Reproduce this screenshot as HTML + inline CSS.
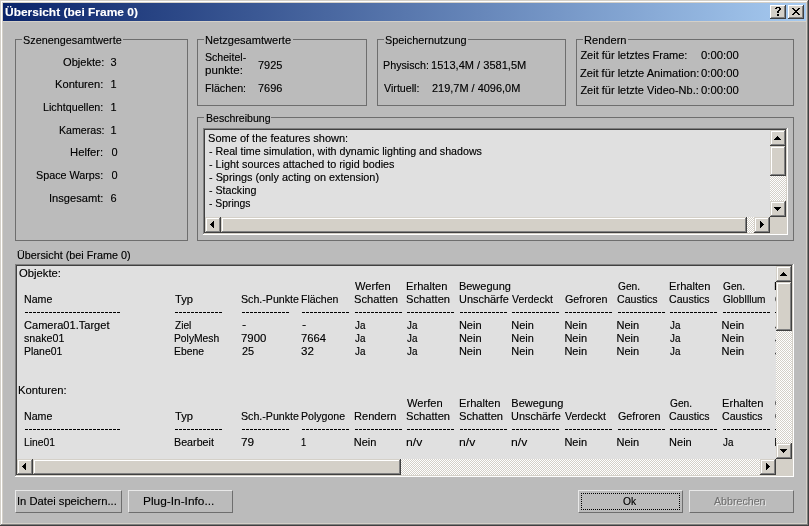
<!DOCTYPE html>
<html><head><meta charset="utf-8"><style>
html,body{margin:0;padding:0;width:809px;height:526px;overflow:hidden;background:#bbbbbb}
body>div,body>svg{position:absolute}
div>div{position:absolute}
.t{position:absolute;font-family:"Liberation Sans", sans-serif;font-size:11px;line-height:13px;height:13px;white-space:pre;color:#000;filter:url(#crisp)}
.g{position:absolute;border:1px solid #6e6e6e}
.tb{position:absolute;width:16px;height:14px;background:#d4d0c8;box-shadow:inset -1px -1px #404040,inset 1px 1px #fff,inset -2px -2px #808080}
.sb{position:absolute;width:16px;height:16px;background:#d4d0c8;box-shadow:inset -1px -1px #404040,inset 1px 1px #d4d0c8,inset -2px -2px #808080,inset 2px 2px #fff}
.th{position:absolute;background:#d4d0c8;border:1px solid;border-color:#d4d0c8 #404040 #404040 #d4d0c8;box-shadow:inset -1px -1px #808080,inset 1px 1px #fff}
.tr{position:absolute;background-color:#fff;background-image:conic-gradient(#d4d0c8 25%,transparent 0 50%,#d4d0c8 0 75%,transparent 0);background-size:2px 2px}
.sk{position:absolute;box-shadow:inset -1px -1px #fff,inset 1px 1px #808080,inset -2px -2px #d4d0c8,inset 2px 2px #404040}
.ski{position:absolute;left:0;top:0;border:1px solid;border-color:#404040 #d4d0c8 #d4d0c8 #404040}
.bt{position:absolute;border:1px solid;border-color:#e8e8e8 #6e6e6e #6e6e6e #e8e8e8;box-sizing:border-box}
.ds{position:absolute;height:1px;background-image:linear-gradient(to right,#000 3px,transparent 3px);background-size:4px 1px}
.focus{position:absolute;box-sizing:border-box;border:1px dotted #000}
i{position:absolute;width:0;height:0;border:solid transparent}
.au{left:4px;top:6px;border-width:0 4px 4px 4px;border-bottom-color:#000}
.ad{left:4px;top:6px;border-width:4px 4px 0 4px;border-top-color:#000}
.al{left:5px;top:4px;border-width:4px 4px 4px 0;border-right-color:#000}
.ar{left:6px;top:4px;border-width:4px 0 4px 4px;border-left-color:#000}
</style></head><body>
<svg width="0" height="0" style="position:absolute"><filter id="crisp" x="0" y="0" width="100%" height="100%"><feComponentTransfer><feFuncA type="gamma" amplitude="1" exponent="0.75" offset="0"/></feComponentTransfer></filter></svg>
<div style="left:0px;top:0px;width:809px;height:526px;background:#404040;"></div>
<div style="left:0px;top:0px;width:808px;height:525px;background:#d4d0c8;"></div>
<div style="left:1px;top:1px;width:807px;height:524px;background:#808080;"></div>
<div style="left:1px;top:1px;width:806px;height:523px;background:#ffffff;"></div>
<div style="left:2px;top:2px;width:805px;height:522px;background:#d4d0c8;"></div>
<div style="left:3px;top:3px;width:803px;height:520px;background:#bbbbbb;"></div>
<div style="left:3px;top:3px;width:803px;height:18px;background:linear-gradient(to right,#0a246a,#a6caf0);"></div>
<div style="left:3px;top:21px;width:803px;height:1px;background:#d4d0c8;"></div>
<div class="t" style="left:4.51px;top:6px;transform:scaleX(1.0868);transform-origin:0 0;color:#fff;font-weight:bold">Übersicht (bei Frame 0)</div>
<div class="tb" style="left:770px;top:5px"></div>
<div class="tb" style="left:788px;top:5px"></div>
<svg style="position:absolute;left:775px;top:7px" width="6" height="9" shape-rendering="crispEdges" fill="#000"><rect x="1" y="0" width="1" height="1"/><rect x="2" y="0" width="1" height="1"/><rect x="3" y="0" width="1" height="1"/><rect x="4" y="0" width="1" height="1"/><rect x="0" y="1" width="1" height="1"/><rect x="1" y="1" width="1" height="1"/><rect x="4" y="1" width="1" height="1"/><rect x="5" y="1" width="1" height="1"/><rect x="4" y="2" width="1" height="1"/><rect x="5" y="2" width="1" height="1"/><rect x="3" y="3" width="1" height="1"/><rect x="4" y="3" width="1" height="1"/><rect x="2" y="4" width="1" height="1"/><rect x="3" y="4" width="1" height="1"/><rect x="2" y="5" width="1" height="1"/><rect x="3" y="5" width="1" height="1"/><rect x="2" y="7" width="1" height="1"/><rect x="3" y="7" width="1" height="1"/><rect x="2" y="8" width="1" height="1"/><rect x="3" y="8" width="1" height="1"/></svg>
<svg style="position:absolute;left:792px;top:8px" width="8" height="7" shape-rendering="crispEdges" fill="#000"><rect x="0" y="0" width="1" height="1"/><rect x="1" y="0" width="1" height="1"/><rect x="6" y="0" width="1" height="1"/><rect x="7" y="0" width="1" height="1"/><rect x="1" y="1" width="1" height="1"/><rect x="2" y="1" width="1" height="1"/><rect x="5" y="1" width="1" height="1"/><rect x="6" y="1" width="1" height="1"/><rect x="2" y="2" width="1" height="1"/><rect x="3" y="2" width="1" height="1"/><rect x="4" y="2" width="1" height="1"/><rect x="5" y="2" width="1" height="1"/><rect x="3" y="3" width="1" height="1"/><rect x="4" y="3" width="1" height="1"/><rect x="2" y="4" width="1" height="1"/><rect x="3" y="4" width="1" height="1"/><rect x="4" y="4" width="1" height="1"/><rect x="5" y="4" width="1" height="1"/><rect x="1" y="5" width="1" height="1"/><rect x="2" y="5" width="1" height="1"/><rect x="5" y="5" width="1" height="1"/><rect x="6" y="5" width="1" height="1"/><rect x="0" y="6" width="1" height="1"/><rect x="1" y="6" width="1" height="1"/><rect x="6" y="6" width="1" height="1"/><rect x="7" y="6" width="1" height="1"/></svg>
<div class="g" style="left:15px;top:39px;width:171px;height:200px"></div>
<div style="left:22px;top:37px;width:101.4px;height:5px;background:#bbbbbb"></div>
<div class="t" style="left:23.02px;top:34px;transform:scaleX(0.9838);transform-origin:0 0;">Szenengesamtwerte</div>
<div class="g" style="left:197px;top:39px;width:168px;height:65px"></div>
<div style="left:204px;top:37px;width:88.5px;height:5px;background:#bbbbbb"></div>
<div class="t" style="left:205.09px;top:34px;transform:scaleX(1.0060);transform-origin:0 0;">Netzgesamtwerte</div>
<div class="g" style="left:377px;top:39px;width:187px;height:65px"></div>
<div style="left:384px;top:37px;width:84.10000000000002px;height:5px;background:#bbbbbb"></div>
<div class="t" style="left:384.81px;top:34px;transform:scaleX(0.9889);transform-origin:0 0;">Speichernutzung</div>
<div class="g" style="left:576px;top:39px;width:216px;height:65px"></div>
<div style="left:583px;top:37px;width:45.299999999999955px;height:5px;background:#bbbbbb"></div>
<div class="t" style="left:583.59px;top:34px;transform:scaleX(1.0073);transform-origin:0 0;">Rendern</div>
<div class="g" style="left:197px;top:117px;width:595px;height:122px"></div>
<div style="left:204px;top:115px;width:67.30000000000001px;height:5px;background:#bbbbbb"></div>
<div class="t" style="left:205.64px;top:112px;transform:scaleX(0.9591);transform-origin:0 0;">Beschreibung</div>
<div class="t" style="left:62.50px;top:56px;transform:scaleX(1.0100);transform-origin:0 0;">Objekte:</div>
<div class="t" style="left:110.60px;top:56px;">3</div>
<div class="t" style="left:55.29px;top:78px;transform:scaleX(1.0130);transform-origin:0 0;">Konturen:</div>
<div class="t" style="left:110.60px;top:78px;">1</div>
<div class="t" style="left:43.32px;top:101px;transform:scaleX(0.9767);transform-origin:0 0;">Lichtquellen:</div>
<div class="t" style="left:110.60px;top:101px;">1</div>
<div class="t" style="left:58.54px;top:124px;transform:scaleX(0.9644);transform-origin:0 0;">Kameras:</div>
<div class="t" style="left:110.60px;top:124px;">1</div>
<div class="t" style="left:70.07px;top:146px;transform:scaleX(1.0258);transform-origin:0 0;">Helfer:</div>
<div class="t" style="left:111.60px;top:146px;">0</div>
<div class="t" style="left:36.32px;top:169px;transform:scaleX(0.9791);transform-origin:0 0;">Space Warps:</div>
<div class="t" style="left:111.60px;top:169px;">0</div>
<div class="t" style="left:49.39px;top:192px;transform:scaleX(1.0096);transform-origin:0 0;">Insgesamt:</div>
<div class="t" style="left:110.60px;top:192px;">6</div>
<div class="t" style="left:205.24px;top:51px;transform:scaleX(0.9619);transform-origin:0 0;">Scheitel-</div>
<div class="t" style="left:205.15px;top:64px;transform:scaleX(1.0529);transform-origin:0 0;">punkte:</div>
<div class="t" style="left:257.70px;top:59px;transform:scaleX(0.9957);transform-origin:0 0;">7925</div>
<div class="t" style="left:205.23px;top:82px;transform:scaleX(0.9732);transform-origin:0 0;">Flächen:</div>
<div class="t" style="left:257.70px;top:82px;transform:scaleX(0.9957);transform-origin:0 0;">7696</div>
<div class="t" style="left:383.12px;top:59px;transform:scaleX(0.9756);transform-origin:0 0;">Physisch:</div>
<div class="t" style="left:431.39px;top:59px;transform:scaleX(1.0054);transform-origin:0 0;">1513,4M / 3581,5M</div>
<div class="t" style="left:384.10px;top:82px;transform:scaleX(0.9722);transform-origin:0 0;">Virtuell:</div>
<div class="t" style="left:432.40px;top:82px;transform:scaleX(0.9955);transform-origin:0 0;">219,7M / 4096,0M</div>
<div class="t" style="left:580.40px;top:49px;">Zeit für letztes Frame:</div>
<div class="t" style="left:701.30px;top:49px;transform:scaleX(1.0306);transform-origin:0 0;">0:00:00</div>
<div class="t" style="left:580.40px;top:67px;transform:scaleX(1.0103);transform-origin:0 0;">Zeit für letzte Animation:</div>
<div class="t" style="left:701.30px;top:67px;transform:scaleX(1.0306);transform-origin:0 0;">0:00:00</div>
<div class="t" style="left:580.40px;top:84px;">Zeit für letzte Video-Nb.:</div>
<div class="t" style="left:701.30px;top:84px;transform:scaleX(1.0306);transform-origin:0 0;">0:00:00</div>
<div class="sk" style="left:203px;top:128px;width:585px;height:107px"></div>
<div style="left:205px;top:130px;width:581px;height:103px;background:#e0e0e0;"></div>
<div class="t" style="left:208.10px;top:132px;">Some of the features shown:</div>
<div class="t" style="left:209.10px;top:145px;transform:scaleX(0.9705);transform-origin:0 0;">- Real time simulation, with dynamic lighting and shadows</div>
<div class="t" style="left:209.10px;top:158px;transform:scaleX(0.9815);transform-origin:0 0;">- Light sources attached to rigid bodies</div>
<div class="t" style="left:209.10px;top:171px;transform:scaleX(0.9860);transform-origin:0 0;">- Springs (only acting on extension)</div>
<div class="t" style="left:209.10px;top:184px;transform:scaleX(0.9688);transform-origin:0 0;">- Stacking</div>
<div class="t" style="left:209.10px;top:197px;transform:scaleX(0.9432);transform-origin:0 0;">- Springs</div>
<div class="sb" style="left:770px;top:130px"></div>
<svg style="position:absolute;left:774px;top:136px" width="7" height="4" shape-rendering="crispEdges" fill="#000"><rect x="3" y="0" width="1" height="1"/><rect x="2" y="1" width="1" height="1"/><rect x="3" y="1" width="1" height="1"/><rect x="4" y="1" width="1" height="1"/><rect x="1" y="2" width="1" height="1"/><rect x="2" y="2" width="1" height="1"/><rect x="3" y="2" width="1" height="1"/><rect x="4" y="2" width="1" height="1"/><rect x="5" y="2" width="1" height="1"/><rect x="0" y="3" width="1" height="1"/><rect x="1" y="3" width="1" height="1"/><rect x="2" y="3" width="1" height="1"/><rect x="3" y="3" width="1" height="1"/><rect x="4" y="3" width="1" height="1"/><rect x="5" y="3" width="1" height="1"/><rect x="6" y="3" width="1" height="1"/></svg>
<div class="sb" style="left:770px;top:146px;width:16px;height:30px"></div>
<div class="tr" style="left:770px;top:176px;width:16px;height:25px"></div>
<div class="sb" style="left:770px;top:201px"></div>
<svg style="position:absolute;left:774px;top:207px" width="7" height="4" shape-rendering="crispEdges" fill="#000"><rect x="0" y="0" width="1" height="1"/><rect x="1" y="0" width="1" height="1"/><rect x="2" y="0" width="1" height="1"/><rect x="3" y="0" width="1" height="1"/><rect x="4" y="0" width="1" height="1"/><rect x="5" y="0" width="1" height="1"/><rect x="6" y="0" width="1" height="1"/><rect x="1" y="1" width="1" height="1"/><rect x="2" y="1" width="1" height="1"/><rect x="3" y="1" width="1" height="1"/><rect x="4" y="1" width="1" height="1"/><rect x="5" y="1" width="1" height="1"/><rect x="2" y="2" width="1" height="1"/><rect x="3" y="2" width="1" height="1"/><rect x="4" y="2" width="1" height="1"/><rect x="3" y="3" width="1" height="1"/></svg>
<div class="sb" style="left:205px;top:217px"></div>
<svg style="position:absolute;left:210px;top:221px" width="4" height="7" shape-rendering="crispEdges" fill="#000"><rect x="3" y="0" width="1" height="1"/><rect x="2" y="1" width="1" height="1"/><rect x="3" y="1" width="1" height="1"/><rect x="1" y="2" width="1" height="1"/><rect x="2" y="2" width="1" height="1"/><rect x="3" y="2" width="1" height="1"/><rect x="0" y="3" width="1" height="1"/><rect x="1" y="3" width="1" height="1"/><rect x="2" y="3" width="1" height="1"/><rect x="3" y="3" width="1" height="1"/><rect x="1" y="4" width="1" height="1"/><rect x="2" y="4" width="1" height="1"/><rect x="3" y="4" width="1" height="1"/><rect x="2" y="5" width="1" height="1"/><rect x="3" y="5" width="1" height="1"/><rect x="3" y="6" width="1" height="1"/></svg>
<div class="sb" style="left:221px;top:217px;width:526px;height:16px"></div>
<div class="tr" style="left:747px;top:217px;width:7px;height:16px"></div>
<div class="sb" style="left:754px;top:217px"></div>
<svg style="position:absolute;left:760px;top:221px" width="4" height="7" shape-rendering="crispEdges" fill="#000"><rect x="0" y="0" width="1" height="1"/><rect x="0" y="1" width="1" height="1"/><rect x="1" y="1" width="1" height="1"/><rect x="0" y="2" width="1" height="1"/><rect x="1" y="2" width="1" height="1"/><rect x="2" y="2" width="1" height="1"/><rect x="0" y="3" width="1" height="1"/><rect x="1" y="3" width="1" height="1"/><rect x="2" y="3" width="1" height="1"/><rect x="3" y="3" width="1" height="1"/><rect x="0" y="4" width="1" height="1"/><rect x="1" y="4" width="1" height="1"/><rect x="2" y="4" width="1" height="1"/><rect x="0" y="5" width="1" height="1"/><rect x="1" y="5" width="1" height="1"/><rect x="0" y="6" width="1" height="1"/></svg>
<div style="left:770px;top:217px;width:16px;height:16px;background:#d4d0c8;"></div>
<div class="t" style="left:16.92px;top:249px;transform:scaleX(0.9833);transform-origin:0 0;">Übersicht (bei Frame 0)</div>
<div class="sk" style="left:15px;top:264px;width:779px;height:213px"></div>
<div style="left:17px;top:266px;width:759px;height:193px;background:#e0e0e0;overflow:hidden">
<div class="t" style="left:2.30px;top:1px;transform:scaleX(1.0250);transform-origin:0 0;">Objekte:</div>
<div class="t" style="left:7.09px;top:27px;transform:scaleX(0.9643);transform-origin:0 0;">Name</div>
<div class="ds" style="left:8px;top:46px;width:95px"></div>
<div class="t" style="left:7.04px;top:53px;transform:scaleX(1.0060);transform-origin:0 0;">Camera01.Target</div>
<div class="t" style="left:7.08px;top:66px;transform:scaleX(0.9700);transform-origin:0 0;">snake01</div>
<div class="t" style="left:7.10px;top:79px;transform:scaleX(0.9487);transform-origin:0 0;">Plane01</div>
<div class="t" style="left:157.90px;top:27px;transform:scaleX(1.0176);transform-origin:0 0;">Typ</div>
<div class="ds" style="left:158px;top:46px;width:47px"></div>
<div class="t" style="left:157.90px;top:53px;transform:scaleX(0.9176);transform-origin:0 0;">Ziel</div>
<div class="t" style="left:156.96px;top:66px;transform:scaleX(0.9362);transform-origin:0 0;">PolyMesh</div>
<div class="t" style="left:156.96px;top:79px;transform:scaleX(0.9419);transform-origin:0 0;">Ebene</div>
<div class="t" style="left:224.23px;top:27px;transform:scaleX(0.9678);transform-origin:0 0;">Sch.-Punkte</div>
<div class="ds" style="left:225px;top:46px;width:47px"></div>
<div class="t" style="left:225.20px;top:52px;transform:scaleX(1.1500);transform-origin:0 0;">-</div>
<div class="t" style="left:224.17px;top:66px;transform:scaleX(1.0348);transform-origin:0 0;">7900</div>
<div class="t" style="left:225.20px;top:79px;transform:scaleX(0.9917);transform-origin:0 0;">25</div>
<div class="t" style="left:284.34px;top:27px;transform:scaleX(0.9553);transform-origin:0 0;">Flächen</div>
<div class="ds" style="left:285px;top:46px;width:47px"></div>
<div class="t" style="left:285.30px;top:52px;transform:scaleX(1.1500);transform-origin:0 0;">-</div>
<div class="t" style="left:284.28px;top:66px;transform:scaleX(1.0217);transform-origin:0 0;">7664</div>
<div class="t" style="left:284.25px;top:79px;transform:scaleX(1.0545);transform-origin:0 0;">32</div>
<div class="t" style="left:338.40px;top:14px;transform:scaleX(1.0114);transform-origin:0 0;">Werfen</div>
<div class="t" style="left:337.39px;top:27px;transform:scaleX(1.0143);transform-origin:0 0;">Schatten</div>
<div class="ds" style="left:338px;top:46px;width:47px"></div>
<div class="t" style="left:338.40px;top:53px;transform:scaleX(0.8917);transform-origin:0 0;">Ja</div>
<div class="t" style="left:338.40px;top:66px;transform:scaleX(0.8917);transform-origin:0 0;">Ja</div>
<div class="t" style="left:338.40px;top:79px;transform:scaleX(0.8917);transform-origin:0 0;">Ja</div>
<div class="t" style="left:389.29px;top:14px;transform:scaleX(1.0128);transform-origin:0 0;">Erhalten</div>
<div class="t" style="left:389.29px;top:27px;transform:scaleX(1.0143);transform-origin:0 0;">Schatten</div>
<div class="ds" style="left:390px;top:46px;width:47px"></div>
<div class="t" style="left:390.30px;top:53px;transform:scaleX(0.8917);transform-origin:0 0;">Ja</div>
<div class="t" style="left:390.30px;top:66px;transform:scaleX(0.8917);transform-origin:0 0;">Ja</div>
<div class="t" style="left:390.30px;top:79px;transform:scaleX(0.8917);transform-origin:0 0;">Ja</div>
<div class="t" style="left:441.90px;top:14px;">Bewegung</div>
<div class="t" style="left:441.91px;top:27px;transform:scaleX(0.9939);transform-origin:0 0;">Unschärfe</div>
<div class="ds" style="left:443px;top:46px;width:47px"></div>
<div class="t" style="left:441.90px;top:53px;">Nein</div>
<div class="t" style="left:441.90px;top:66px;">Nein</div>
<div class="t" style="left:441.90px;top:79px;">Nein</div>
<div class="t" style="left:495.30px;top:27px;transform:scaleX(0.9535);transform-origin:0 0;">Verdeckt</div>
<div class="ds" style="left:495px;top:46px;width:47px"></div>
<div class="t" style="left:494.30px;top:53px;">Nein</div>
<div class="t" style="left:494.30px;top:66px;">Nein</div>
<div class="t" style="left:494.30px;top:79px;">Nein</div>
<div class="t" style="left:548.40px;top:27px;transform:scaleX(0.9767);transform-origin:0 0;">Gefroren</div>
<div class="ds" style="left:548px;top:46px;width:47px"></div>
<div class="t" style="left:547.40px;top:53px;">Nein</div>
<div class="t" style="left:547.40px;top:66px;">Nein</div>
<div class="t" style="left:547.40px;top:79px;">Nein</div>
<div class="t" style="left:600.50px;top:14px;transform:scaleX(0.9261);transform-origin:0 0;">Gen.</div>
<div class="t" style="left:599.54px;top:27px;transform:scaleX(0.9634);transform-origin:0 0;">Caustics</div>
<div class="ds" style="left:601px;top:46px;width:47px"></div>
<div class="t" style="left:599.50px;top:53px;">Nein</div>
<div class="t" style="left:599.50px;top:66px;">Nein</div>
<div class="t" style="left:599.50px;top:79px;">Nein</div>
<div class="t" style="left:652.09px;top:14px;transform:scaleX(1.0128);transform-origin:0 0;">Erhalten</div>
<div class="t" style="left:652.14px;top:27px;transform:scaleX(0.9634);transform-origin:0 0;">Caustics</div>
<div class="ds" style="left:653px;top:46px;width:47px"></div>
<div class="t" style="left:653.10px;top:53px;transform:scaleX(0.8917);transform-origin:0 0;">Ja</div>
<div class="t" style="left:653.10px;top:66px;transform:scaleX(0.8917);transform-origin:0 0;">Ja</div>
<div class="t" style="left:653.10px;top:79px;transform:scaleX(0.8917);transform-origin:0 0;">Ja</div>
<div class="t" style="left:705.60px;top:14px;transform:scaleX(0.9261);transform-origin:0 0;">Gen.</div>
<div class="t" style="left:705.60px;top:27px;transform:scaleX(0.9130);transform-origin:0 0;">GlobIllum</div>
<div class="ds" style="left:706px;top:46px;width:47px"></div>
<div class="t" style="left:704.60px;top:53px;">Nein</div>
<div class="t" style="left:704.60px;top:66px;">Nein</div>
<div class="t" style="left:704.60px;top:79px;">Nein</div>
<div class="t" style="left:757.29px;top:14px;transform:scaleX(1.0128);transform-origin:0 0;">Erhalten</div>
<div class="t" style="left:758.30px;top:27px;transform:scaleX(0.9130);transform-origin:0 0;">GlobIllum</div>
<div class="ds" style="left:758px;top:46px;width:47px"></div>
<div class="t" style="left:758.30px;top:53px;transform:scaleX(0.8917);transform-origin:0 0;">Ja</div>
<div class="t" style="left:758.30px;top:66px;transform:scaleX(0.8917);transform-origin:0 0;">Ja</div>
<div class="t" style="left:758.30px;top:79px;transform:scaleX(0.8917);transform-origin:0 0;">Ja</div>
<div class="t" style="left:1.28px;top:118px;transform:scaleX(1.0217);transform-origin:0 0;">Konturen:</div>
<div class="t" style="left:7.09px;top:144px;transform:scaleX(0.9643);transform-origin:0 0;">Name</div>
<div class="ds" style="left:8px;top:163px;width:95px"></div>
<div class="t" style="left:7.11px;top:170px;transform:scaleX(0.9375);transform-origin:0 0;">Line01</div>
<div class="t" style="left:157.90px;top:144px;transform:scaleX(1.0176);transform-origin:0 0;">Typ</div>
<div class="ds" style="left:158px;top:163px;width:47px"></div>
<div class="t" style="left:156.93px;top:170px;transform:scaleX(0.9750);transform-origin:0 0;">Bearbeit</div>
<div class="t" style="left:224.23px;top:144px;transform:scaleX(0.9678);transform-origin:0 0;">Sch.-Punkte</div>
<div class="ds" style="left:225px;top:163px;width:47px"></div>
<div class="t" style="left:224.13px;top:170px;transform:scaleX(1.0727);transform-origin:0 0;">79</div>
<div class="t" style="left:284.34px;top:144px;transform:scaleX(0.9600);transform-origin:0 0;">Polygone</div>
<div class="ds" style="left:285px;top:163px;width:47px"></div>
<div class="t" style="left:284.45px;top:170px;transform:scaleX(0.8500);transform-origin:0 0;">1</div>
<div class="t" style="left:336.79px;top:144px;transform:scaleX(1.0073);transform-origin:0 0;">Rendern</div>
<div class="ds" style="left:338px;top:163px;width:47px"></div>
<div class="t" style="left:336.80px;top:170px;">Nein</div>
<div class="t" style="left:390.30px;top:131px;transform:scaleX(1.0114);transform-origin:0 0;">Werfen</div>
<div class="t" style="left:389.29px;top:144px;transform:scaleX(1.0143);transform-origin:0 0;">Schatten</div>
<div class="ds" style="left:390px;top:163px;width:47px"></div>
<div class="t" style="left:389.19px;top:170px;transform:scaleX(1.1071);transform-origin:0 0;">n/v</div>
<div class="t" style="left:441.89px;top:131px;transform:scaleX(1.0128);transform-origin:0 0;">Erhalten</div>
<div class="t" style="left:441.89px;top:144px;transform:scaleX(1.0143);transform-origin:0 0;">Schatten</div>
<div class="ds" style="left:443px;top:163px;width:47px"></div>
<div class="t" style="left:441.79px;top:170px;transform:scaleX(1.1071);transform-origin:0 0;">n/v</div>
<div class="t" style="left:494.30px;top:131px;">Bewegung</div>
<div class="t" style="left:494.31px;top:144px;transform:scaleX(0.9939);transform-origin:0 0;">Unschärfe</div>
<div class="ds" style="left:495px;top:163px;width:47px"></div>
<div class="t" style="left:494.19px;top:170px;transform:scaleX(1.1071);transform-origin:0 0;">n/v</div>
<div class="t" style="left:548.40px;top:144px;transform:scaleX(0.9535);transform-origin:0 0;">Verdeckt</div>
<div class="ds" style="left:548px;top:163px;width:47px"></div>
<div class="t" style="left:547.40px;top:170px;">Nein</div>
<div class="t" style="left:600.50px;top:144px;transform:scaleX(0.9767);transform-origin:0 0;">Gefroren</div>
<div class="ds" style="left:601px;top:163px;width:47px"></div>
<div class="t" style="left:599.50px;top:170px;">Nein</div>
<div class="t" style="left:653.10px;top:131px;transform:scaleX(0.9261);transform-origin:0 0;">Gen.</div>
<div class="t" style="left:652.14px;top:144px;transform:scaleX(0.9634);transform-origin:0 0;">Caustics</div>
<div class="ds" style="left:653px;top:163px;width:47px"></div>
<div class="t" style="left:652.10px;top:170px;">Nein</div>
<div class="t" style="left:704.59px;top:131px;transform:scaleX(1.0128);transform-origin:0 0;">Erhalten</div>
<div class="t" style="left:704.64px;top:144px;transform:scaleX(0.9634);transform-origin:0 0;">Caustics</div>
<div class="ds" style="left:706px;top:163px;width:47px"></div>
<div class="t" style="left:705.60px;top:170px;transform:scaleX(0.8917);transform-origin:0 0;">Ja</div>
<div class="t" style="left:758.30px;top:131px;transform:scaleX(0.9261);transform-origin:0 0;">Gen.</div>
<div class="t" style="left:758.30px;top:144px;transform:scaleX(0.9130);transform-origin:0 0;">GlobIllum</div>
<div class="ds" style="left:758px;top:163px;width:47px"></div>
<div class="t" style="left:757.30px;top:170px;">Nein</div>
</div>
<div class="sb" style="left:776px;top:266px"></div>
<svg style="position:absolute;left:780px;top:272px" width="7" height="4" shape-rendering="crispEdges" fill="#000"><rect x="3" y="0" width="1" height="1"/><rect x="2" y="1" width="1" height="1"/><rect x="3" y="1" width="1" height="1"/><rect x="4" y="1" width="1" height="1"/><rect x="1" y="2" width="1" height="1"/><rect x="2" y="2" width="1" height="1"/><rect x="3" y="2" width="1" height="1"/><rect x="4" y="2" width="1" height="1"/><rect x="5" y="2" width="1" height="1"/><rect x="0" y="3" width="1" height="1"/><rect x="1" y="3" width="1" height="1"/><rect x="2" y="3" width="1" height="1"/><rect x="3" y="3" width="1" height="1"/><rect x="4" y="3" width="1" height="1"/><rect x="5" y="3" width="1" height="1"/><rect x="6" y="3" width="1" height="1"/></svg>
<div class="sb" style="left:776px;top:282px;width:16px;height:49px"></div>
<div class="tr" style="left:776px;top:331px;width:16px;height:112px"></div>
<div class="sb" style="left:776px;top:443px"></div>
<svg style="position:absolute;left:780px;top:449px" width="7" height="4" shape-rendering="crispEdges" fill="#000"><rect x="0" y="0" width="1" height="1"/><rect x="1" y="0" width="1" height="1"/><rect x="2" y="0" width="1" height="1"/><rect x="3" y="0" width="1" height="1"/><rect x="4" y="0" width="1" height="1"/><rect x="5" y="0" width="1" height="1"/><rect x="6" y="0" width="1" height="1"/><rect x="1" y="1" width="1" height="1"/><rect x="2" y="1" width="1" height="1"/><rect x="3" y="1" width="1" height="1"/><rect x="4" y="1" width="1" height="1"/><rect x="5" y="1" width="1" height="1"/><rect x="2" y="2" width="1" height="1"/><rect x="3" y="2" width="1" height="1"/><rect x="4" y="2" width="1" height="1"/><rect x="3" y="3" width="1" height="1"/></svg>
<div class="sb" style="left:17px;top:459px"></div>
<svg style="position:absolute;left:22px;top:463px" width="4" height="7" shape-rendering="crispEdges" fill="#000"><rect x="3" y="0" width="1" height="1"/><rect x="2" y="1" width="1" height="1"/><rect x="3" y="1" width="1" height="1"/><rect x="1" y="2" width="1" height="1"/><rect x="2" y="2" width="1" height="1"/><rect x="3" y="2" width="1" height="1"/><rect x="0" y="3" width="1" height="1"/><rect x="1" y="3" width="1" height="1"/><rect x="2" y="3" width="1" height="1"/><rect x="3" y="3" width="1" height="1"/><rect x="1" y="4" width="1" height="1"/><rect x="2" y="4" width="1" height="1"/><rect x="3" y="4" width="1" height="1"/><rect x="2" y="5" width="1" height="1"/><rect x="3" y="5" width="1" height="1"/><rect x="3" y="6" width="1" height="1"/></svg>
<div class="sb" style="left:33px;top:459px;width:368px;height:16px"></div>
<div class="tr" style="left:401px;top:459px;width:359px;height:16px"></div>
<div class="sb" style="left:760px;top:459px"></div>
<svg style="position:absolute;left:766px;top:463px" width="4" height="7" shape-rendering="crispEdges" fill="#000"><rect x="0" y="0" width="1" height="1"/><rect x="0" y="1" width="1" height="1"/><rect x="1" y="1" width="1" height="1"/><rect x="0" y="2" width="1" height="1"/><rect x="1" y="2" width="1" height="1"/><rect x="2" y="2" width="1" height="1"/><rect x="0" y="3" width="1" height="1"/><rect x="1" y="3" width="1" height="1"/><rect x="2" y="3" width="1" height="1"/><rect x="3" y="3" width="1" height="1"/><rect x="0" y="4" width="1" height="1"/><rect x="1" y="4" width="1" height="1"/><rect x="2" y="4" width="1" height="1"/><rect x="0" y="5" width="1" height="1"/><rect x="1" y="5" width="1" height="1"/><rect x="0" y="6" width="1" height="1"/></svg>
<div style="left:776px;top:459px;width:16px;height:16px;background:#d4d0c8;"></div>
<div class="bt" style="left:15px;top:490px;width:107px;height:23px"></div>
<div class="t" style="left:16.98px;top:495px;transform:scaleX(1.0198);transform-origin:0 0;">In Datei speichern...</div>
<div class="bt" style="left:128px;top:490px;width:105px;height:23px"></div>
<div class="t" style="left:143.02px;top:495px;transform:scaleX(1.0797);transform-origin:0 0;">Plug-In-Info...</div>
<div class="bt" style="left:578px;top:490px;width:105px;height:23px"></div>
<div class="t" style="left:622.50px;top:495px;transform:scaleX(0.9357);transform-origin:0 0;">Ok</div>
<div class="focus" style="left:581px;top:493px;width:99px;height:17px"></div>
<div class="bt" style="left:689px;top:490px;width:105px;height:23px"></div>
<div class="t" style="left:714.30px;top:495px;transform:scaleX(0.9679);transform-origin:0 0;color:#707070;text-shadow:1px 1px 0 #e6e6e6">Abbrechen</div>
</body></html>
